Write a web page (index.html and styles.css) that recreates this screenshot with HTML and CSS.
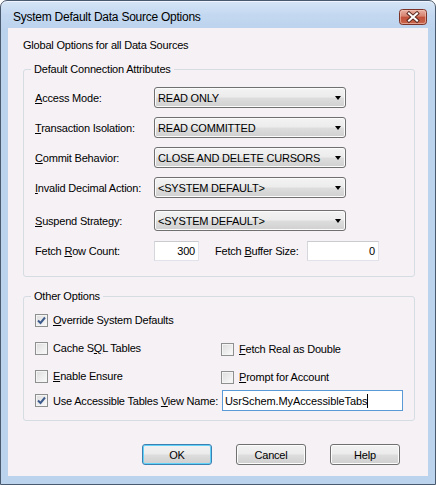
FILE: index.html
```html
<!DOCTYPE html>
<html>
<head>
<meta charset="utf-8">
<link rel="stylesheet" href="styles.css">
</head>
<body>
<div class="window">
  <div class="titlebar">
    <span class="title">System Default Data Source Options</span>
    <span class="close">
      <svg width="28" height="16" viewBox="0 0 28 16">
        <defs>
          <linearGradient id="cg" x1="0" y1="0" x2="0" y2="1">
            <stop offset="0" stop-color="#eab3a6"/>
            <stop offset="0.45" stop-color="#d7826f"/>
            <stop offset="0.5" stop-color="#c2503a"/>
            <stop offset="1" stop-color="#c8664d"/>
          </linearGradient>
        </defs>
        <rect x="0.5" y="0.5" width="27" height="15" rx="3" fill="url(#cg)" stroke="#7a3326"/>
        <rect x="1.5" y="1.5" width="25" height="13" rx="2" fill="none" stroke="#f3c9bd" stroke-opacity="0.6"/>
        <path d="M10 4.5 L18 11.5 M18 4.5 L10 11.5" stroke="#5a2a22" stroke-width="4" stroke-linecap="square"/>
        <path d="M10 4.5 L18 11.5 M18 4.5 L10 11.5" stroke="#ffffff" stroke-width="2" stroke-linecap="square"/>
      </svg>
    </span>
  </div>
  <div class="frame">
    <div class="client">
      <div class="intro">Global Options for all Data Sources</div>

      <fieldset class="group g1">
        <legend>Default Connection Attributes</legend>
        <div class="rows">
          <div class="row">
            <span class="lbl"><u>A</u>ccess Mode:</span>
            <div class="combo"><span>READ ONLY</span><i class="arrow"></i></div>
          </div>
          <div class="row">
            <span class="lbl"><u>T</u>ransaction Isolation:</span>
            <div class="combo"><span>READ COMMITTED</span><i class="arrow"></i></div>
          </div>
          <div class="row">
            <span class="lbl"><u>C</u>ommit Behavior:</span>
            <div class="combo"><span>CLOSE AND DELETE CURSORS</span><i class="arrow"></i></div>
          </div>
          <div class="row r4">
            <span class="lbl"><u>I</u>nvalid Decimal Action:</span>
            <div class="combo"><span>&lt;SYSTEM DEFAULT&gt;</span><i class="arrow"></i></div>
          </div>
          <div class="row r5">
            <span class="lbl"><u>S</u>uspend Strategy:</span>
            <div class="combo"><span>&lt;SYSTEM DEFAULT&gt;</span><i class="arrow"></i></div>
          </div>
          <div class="row fetch">
            <span class="lbl">Fetch <u>R</u>ow Count:</span>
            <div class="num n1">300</div>
            <span class="lbl2">Fetch <u>B</u>uffer Size:</span>
            <div class="num n2">0</div>
          </div>
        </div>
      </fieldset>

      <fieldset class="group g2">
        <legend>Other Options</legend>
        <div class="checks">
          <div class="chk"><span class="box on"><svg width="11" height="11" viewBox="0 0 11 11"><path d="M2 5.5 L4.5 8 L9 2.5" fill="none" stroke="#3d5a8c" stroke-width="2"/></svg></span><span><u>O</u>verride System Defaults</span></div>
          <div></div>
          <div class="chk"><span class="box"></span><span>Cache S<u>Q</u>L Tables</span></div>
          <div class="chk right"><span class="box"></span><span><u>F</u>etch Real as Double</span></div>
          <div class="chk"><span class="box"></span><span><u>E</u>nable Ensure</span></div>
          <div class="chk right"><span class="box"></span><span><u>P</u>rompt for Account</span></div>
        </div>
        <div class="viewrow">
          <div class="chk vlabel"><span class="box on"><svg width="11" height="11" viewBox="0 0 11 11"><path d="M2 5.5 L4.5 8 L9 2.5" fill="none" stroke="#3d5a8c" stroke-width="2"/></svg></span><span>Use Accessible Tables <u>V</u>iew Name:</span></div>
          <div class="viewinput"><span>UsrSchem.MyAccessibleTabs</span><i class="caret"></i></div>
        </div>
      </fieldset>

      <div class="buttons">
        <div class="btn default">OK</div>
        <div class="btn">Cancel</div>
        <div class="btn">Help</div>
      </div>
    </div>
  </div>
</div>
</body>
</html>
```
FILE: styles.css
```css
* { box-sizing: border-box; }

body {
  margin: 0;
  font-family: "Liberation Sans", Arial, sans-serif;
  font-size: 11px;
  letter-spacing: -0.2px;
  color: #000;
  background: #ffffff;
}

u { text-decoration: underline; text-underline-offset: 1px; }

.window {
  width: 436px;
  height: 485px;
  border: 1px solid #4a5a6e;
  border-radius: 7px 7px 0 0;
  background: linear-gradient(#d6e5f6 0px, #c3d8f0 14px, #bcd3ee 28px, #bcd3ee 100%);
  display: flex;
  flex-direction: column;
  box-shadow: inset 0 1px 0 #eef5fc;
}

.titlebar {
  height: 27px;
  display: flex;
  align-items: flex-start;
  justify-content: space-between;
  padding: 0 8px 0 12px;
}

.title {
  font-size: 12px;
  letter-spacing: -0.25px;
  line-height: 15px;
  margin-top: 9px;
  color: #000;
}

.close {
  display: block;
  width: 28px;
  height: 16px;
  margin-top: 8px;
}
.close svg { display: block; }

.frame {
  flex: 1;
  padding: 0 7px 8px;
  display: flex;
}

.client {
  flex: 1;
  background: #f5f1f5;
  padding: 11px 0 0 15px;
  display: flex;
  flex-direction: column;
}

.intro { line-height: 13px; }

.group {
  margin: 11px 0 0 0;
  width: 392px;
  border: 1px solid #d5dde3;
  border-radius: 3px;
  min-width: 0;
}

.group legend {
  padding: 0 3px;
  margin-left: -4px;
  line-height: 13px;
}

.g1 { padding: 11px 10px 15px 11px; }

.rows {
  display: flex;
  flex-direction: column;
}

.row {
  display: flex;
  align-items: center;
  height: 21px;
  margin-bottom: 9px;
}
.row.r4 { margin-bottom: 12px; }
.row.r5 { margin-bottom: 10px; }
.row.fetch { height: 20px; margin-bottom: 0; }

.lbl { width: 119px; flex: none; }

.combo {
  width: 192px;
  height: 21px;
  border: 1px solid #707070;
  border-radius: 3px;
  background: linear-gradient(#f3f3f3 0%, #ececec 48%, #dddddd 52%, #d0d0d0 100%);
  box-shadow: inset 0 0 0 1px #fbfbfb;
  display: flex;
  align-items: center;
  justify-content: space-between;
  padding: 0 4px 0 3px;
}

.arrow {
  width: 0;
  height: 0;
  border-left: 3.5px solid transparent;
  border-right: 3.5px solid transparent;
  border-top: 4px solid #000;
  margin-top: 1px;
}

.num {
  height: 20px;
  background: #fff;
  border: 1px solid #e2e3ea;
  border-top-color: #c9cbd1;
  border-left-color: #d5d7dd;
  text-align: right;
  padding: 0 3px;
  line-height: 18px;
}
.num.n1 { width: 45px; }
.num.n2 { width: 72px; }

.lbl2 { width: 92px; margin-left: 16px; flex: none; }

.g2 {
  margin-top: 13px;
  padding: 9px 10px 9px 11px;
}

.checks {
  display: grid;
  grid-template-columns: 186px 1fr;
  grid-auto-rows: 16px;
  row-gap: 12px;
}

.chk {
  display: flex;
  align-items: center;
  gap: 5px;
  height: 16px;
  white-space: nowrap;
}
.chk.right { margin-top: 1px; }

.box {
  width: 13px;
  height: 13px;
  flex: none;
  border: 1px solid #8e8f8f;
  background: linear-gradient(135deg, #dcdcdc, #fbfbfb);
  box-shadow: inset 0 0 0 1px #f4f4f4;
  display: flex;
  align-items: center;
  justify-content: center;
}
.box svg { display: block; }

.viewrow {
  display: flex;
  align-items: center;
  margin-top: 6px;
  height: 21px;
}
.vlabel { width: 187px; flex: none; }

.viewinput {
  width: 181px;
  height: 21px;
  border: 1px solid #5a9ad6;
  background: #fff;
  display: flex;
  align-items: center;
  padding-left: 2px;
  font-size: 11px;
  letter-spacing: -0.1px;
}
.caret {
  width: 1px;
  height: 14px;
  background: #000;
  margin-left: 0;
}

.buttons {
  display: flex;
  justify-content: flex-end;
  gap: 24px;
  padding-right: 28px;
  margin-top: 23px;
}

.btn {
  width: 70px;
  height: 21px;
  border: 1px solid #707070;
  border-radius: 3px;
  background: linear-gradient(#f2f2f2 0%, #ebebeb 48%, #dddddd 52%, #cfcfcf 100%);
  box-shadow: inset 0 0 0 1px #fcfcfc;
  display: flex;
  align-items: center;
  justify-content: center;
}
.btn.default {
  border-color: #3c7fb1;
  box-shadow: inset 0 0 0 1px #61d2f9;
}
```
